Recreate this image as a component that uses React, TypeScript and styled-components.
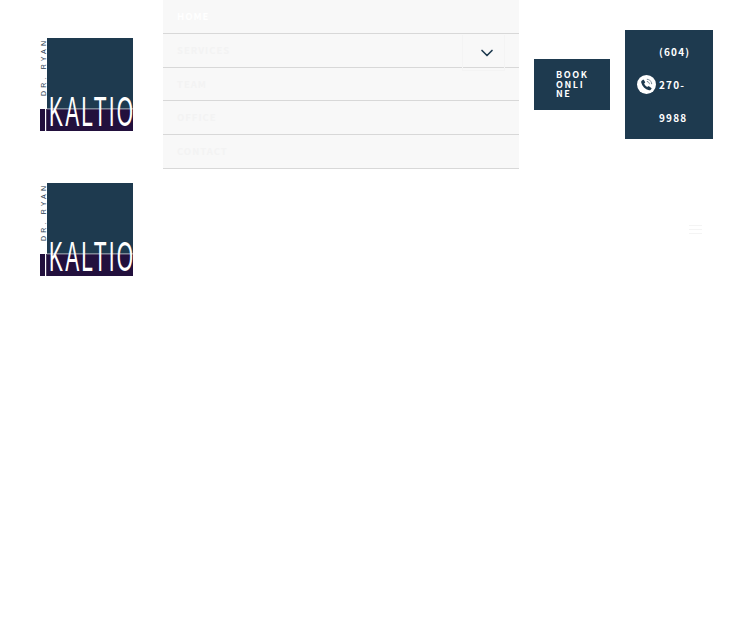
import styled, { createGlobalStyle } from "styled-components";
import { ChevronDown } from "lucide-react";

const GlobalStyle = createGlobalStyle`
  html, body {
    margin: 0;
    padding: 0;
    background: #ffffff;
    font-family: "Noto Sans CJK SC", "Noto Sans", sans-serif;
  }
`;

const Page = styled.div`
  width: 750px;
  height: 628px;
  overflow: hidden;
  display: flex;
  flex-direction: column;
  gap: 14px;
`;

const DesktopHeader = styled.header`
  height: 169px;
  padding: 0 37px 0 40px;
  display: flex;
  align-items: center;
`;

const MobileHeader = styled.header`
  height: 93px;
  padding: 0 48px 0 40px;
  display: flex;
  align-items: center;
  justify-content: space-between;
`;

const LogoMark = styled.svg`
  width: 93px;
  height: 93px;
  flex: none;
  display: block;
`;

const Nav = styled.nav`
  width: 356px;
  margin-left: 30px;
  margin-right: 15px;
  flex: none;
  position: relative;
  align-self: flex-start;
`;

const NavList = styled.ul`
  list-style: none;
  margin: 0;
  padding: 0;
`;

const NavItem = styled.li<{ $active?: boolean }>`
  height: 31.75px;
  padding: 1px 0 0 14px;
  background: #f8f8f8;
  border-bottom: 1px solid #d8d8d8;
  display: flex;
  align-items: center;
  font-size: 9.5px;
  line-height: 1;
  font-weight: 700;
  letter-spacing: 1px;
  color: ${(props) => (props.$active ? "#ffffff" : "#f3f3f3")};
`;

const SubToggle = styled.div`
  position: absolute;
  top: 35px;
  left: 299px;
  width: 43px;
  height: 36px;
  padding-left: 6px;
  border: 1px solid #f4f4f4;
  border-top: none;
  box-sizing: border-box;
  display: flex;
  align-items: center;
  justify-content: center;
  color: #1e3a4f;
`;

const BookButton = styled.a`
  width: 76px;
  padding: 11px 20px 11px 22px;
  box-sizing: border-box;
  flex: none;
  margin-right: 15px;
  background: #1e3a4f;
  color: #ffffff;
  font-size: 9px;
  line-height: 9.5px;
  font-weight: 700;
  letter-spacing: 1.6px;
  overflow-wrap: anywhere;
`;

const PhoneButton = styled.a`
  width: 88px;
  height: 109px;
  padding-left: 12px;
  box-sizing: border-box;
  flex: none;
  background: #1e3a4f;
  color: #ffffff;
  display: flex;
  align-items: center;
  gap: 3px;
`;

const PhoneIcon = styled.svg`
  width: 19px;
  height: 19px;
  flex: none;
`;

const PhoneNumber = styled.span`
  width: 36px;
  font-size: 10px;
  line-height: 33px;
  font-weight: 700;
  letter-spacing: 1.2px;
`;

const Hamburger = styled.div`
  width: 13px;
  display: flex;
  flex-direction: column;
  gap: 3px;
`;

const HamburgerBar = styled.span`
  height: 1px;
  background: #f4f4f4;
`;

function Logo() {
  return (
    <LogoMark viewBox="0 0 93 93">
      <rect x="7" y="0" width="86" height="71" fill="#1e3a4f" />
      <rect x="0" y="71" width="93" height="22" fill="#22103d" />
      <rect x="5" y="71" width="1.2" height="22" fill="#ffffff" />
      <text
        transform="translate(5.5 58) rotate(-90)"
        fontFamily="Liberation Sans, sans-serif"
        fontSize="7"
        fill="#1e3a4f"
        textLength="55"
      >
        DR. RYAN
      </text>
      <text
        transform="translate(9 88) scale(0.5 1)"
        fontFamily="Liberation Sans, sans-serif"
        fontSize="42"
        fill="#ffffff"
        textLength="168"
      >
        KALTIO
      </text>
      <rect x="7" y="70.5" width="86" height="0.8" fill="#ffffff" opacity="0.8" />
    </LogoMark>
  );
}

export default function App() {
  return (
    <Page>
      <GlobalStyle />
      <DesktopHeader>
        <Logo />
        <Nav>
          <NavList>
            <NavItem $active>HOME</NavItem>
            <NavItem>SERVICES</NavItem>
            <NavItem>TEAM</NavItem>
            <NavItem>OFFICE</NavItem>
            <NavItem>CONTACT</NavItem>
          </NavList>
          <SubToggle>
            <ChevronDown size={20} strokeWidth={2} />
          </SubToggle>
        </Nav>
        <BookButton>BOOK ONLINE</BookButton>
        <PhoneButton>
          <PhoneIcon viewBox="0 0 24 24">
            <circle cx="12" cy="12" r="12" fill="#ffffff" />
            <path
              d="M8.2 5.5l2 3.3c.2.4.1.8-.2 1.1l-1 .9c.7 1.7 2 3.2 3.9 4.4l1.1-.9c.3-.3.8-.3 1.1-.1l3 2.1c.4.3.5.8.2 1.2l-1 1.2c-.5.6-1.3.8-2.1.6-5-1.3-8.6-5.2-9.9-9.9-.2-.8 0-1.5.6-2l1.3-1.1c.3-.3.8-.2 1 .2z"
              fill="#1e3a4f"
            />
            <path d="M12.5 5.5a6 6 0 0 1 6 6" fill="none" stroke="#1e3a4f" strokeWidth="1.2" strokeDasharray="1.2 .8" />
            <path d="M12.5 8.3a3.2 3.2 0 0 1 3.2 3.2" fill="none" stroke="#1e3a4f" strokeWidth="1.2" strokeDasharray="1.2 .8" />
          </PhoneIcon>
          <PhoneNumber>(604) 270-9988</PhoneNumber>
        </PhoneButton>
      </DesktopHeader>
      <MobileHeader>
        <Logo />
        <Hamburger>
          <HamburgerBar />
          <HamburgerBar />
          <HamburgerBar />
        </Hamburger>
      </MobileHeader>
    </Page>
  );
}
